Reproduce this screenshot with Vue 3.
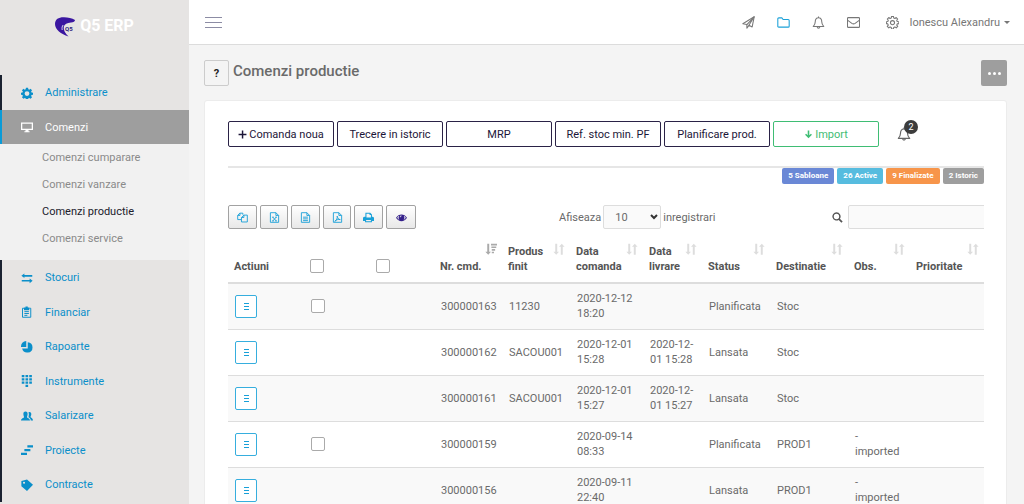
<script setup>
import { ref } from 'vue'

const menuTop = [
  { label: 'Administrare', icon: 'gear' },
  { label: 'Comenzi', icon: 'monitor', active: true },
]
const submenu = ['Comenzi cumparare', 'Comenzi vanzare', 'Comenzi productie', 'Comenzi service']
const menuBottom = [
  { label: 'Stocuri', icon: 'swap' },
  { label: 'Financiar', icon: 'clipboard' },
  { label: 'Rapoarte', icon: 'pie' },
  { label: 'Instrumente', icon: 'dialpad' },
  { label: 'Salarizare', icon: 'people' },
  { label: 'Proiecte', icon: 'steps' },
  { label: 'Contracte', icon: 'tag' },
]

// 16 x 16 drawings; "s" entries are stroked, "f" entries are filled
const icons = {
  gear: { f: ['M6.6 1h2.8l.4 2 1.2.5 1.7-1.2 2 2-1.2 1.7.5 1.2 2 .4v2.8l-2 .4-.5 1.2 1.2 1.7-2 2-1.7-1.2-1.2.5-.4 2H6.600l-.4-2-1.200-.5-1.700 1.200-2-2 1.200-1.700-.5-1.200-2-.4V7.600l2-.4.5-1.200L1.300 4.300l2-2L5 3.500 6.200 3zM8 5.500a3.200 3.200 0 1 0 0 6.400 3.200 3.200 0 0 0 0-6.400z'] },
  monitor: { f: ['M0 2h16v10h-6v1.500h1.500V15h-7v-1.500H6V12H0zM1.700 3.700v6.600h12.600V3.700z'] },
  swap: { f: ['M4.500 2v2H15v2.200H4.500V8L.5 5zM11.500 8.500v2H1v2.200h10.500V15l4-3.300z'] },
  clipboard: { s: ['M4 3H2v12h11V3h-2', 'M4.500 7.500h6M4.500 10h6M4.500 12.500h4'], f: ['M4 2h2V.5h3V2h2v3.500H4z'] },
  pie: { f: ['M7 0v8H0a7 7.500 0 0 1 7-8z', 'M9 1.500a7 7 0 1 1-7.500 8.500H9z'] },
  dialpad: { f: ['M1 0h3.500v3H1zM6 0h3.500v3H6zM11 0h3.500v3H11zM1 4.300h3.500v3H1zM6 4.300h3.500v3H6zM11 4.300h3.500v3H11zM1 8.600h3.500v3H1zM6 8.600h3.500v3H6zM11 8.600h3.500v3H11zM6 13h3.500v3H6z'] },
  people: { f: ['M6 2c2.200 0 3 1.500 2.800 3.500C8.700 7.500 8 8 8 9.500c0 1 4 1.200 4 4.500H0c0-3.300 4-3.500 4-4.500C4 8 3.300 7.500 3.200 5.500 3 3.500 3.800 2 6 2z', 'M10 3c2.500-.8 4 .5 3.700 3-.1 1.500-.9 2-.9 3.300 0 1 3.200 1.400 3.200 4.700h-3c0-2.700-1.500-3.600-3-4.500 0-1.500.5-2.500.5-4z'] },
  steps: { f: ['M8.500 1.500H16v3H8.500zM4.500 6.500h8v3h-8zM0 11.500h8v3H0z'] },
  tag: { f: ['M.5 2.500 8 .5l8 7L8 16 .5 9.500zM4 3.600a1.400 1.400 0 1 0 .1 2.800A1.400 1.400 0 0 0 4 3.600z'] },
  plane: { s: ['M1 9.500 15 1l-2.500 12.500-4-2L6 15v-4.500z', 'M6 10.500 15 1l-6.500 10.500'] },
  folder: { s: ['M1 3.500q0-1.200 1.200-1.200H6l1.500 2h6.300q1.200 0 1.200 1.200v7q0 1.200-1.200 1.200H2.200Q1 13.700 1 12.500z'] },
  bell: { s: ['M8 2.200c-3 0-4 2.300-4 5 0 3-1 4.300-2.500 5.800h13C13 11.500 12 10.200 12 7.200c0-2.700-1-5-4-5zM8 .6v1.600M6.300 13.200c.3 2.300 3.100 2.300 3.400 0'] },
  mail: { s: ['M.6 3q0-1 1-1h12.800q1 0 1 1v10q0 1-1 1H1.600q-1 0-1-1z', 'M.6 5l5.400 4q2 1.400 4 0l5.400-4'] },
  cog: { s: ['M6.800.5h2.400l.3 2 1.500.6 1.600-1.200 1.800 1.800-1.200 1.600.6 1.500 2 .3v2.300l-2 .3-.6 1.500 1.200 1.600-1.800 1.800-1.600-1.200-1.500.6-.3 2H6.800l-.3-2-1.500-.6-1.600 1.200-1.800-1.800 1.200-1.600-.6-1.500-1.700-.3V7.100l1.700-.3.6-1.500-1.200-1.600 1.800-1.800L5 3.100l1.500-.6z', 'M8 5.700a2.500 2.500 0 1 0 0 5 2.500 2.500 0 0 0 0-5z'] },
  copy: { s: ['M6 11H1V5l3-3.300h4.500V4', 'M4.300 1.700V5H1', 'M6.500 14.500V8l3.500-3.500h5v10z', 'M10 4.500V8H6.500'] },
  excel: { s: ['M2 1h8l4 4v10H2z', 'M10 1v4h4', 'm5.500 7.500 5 5.500m0-5.500-5 5.500M4.500 13H7m2 0h2.500M4.500 7.500H7m2 0h2.500'] },
  file: { s: ['M2 1h8l4 4v10H2z', 'M10 1v4h4', 'M4.500 7.500h7M4.500 10h7M4.500 12.500h7'] },
  pdf: { s: ['M2 1h8l4 4v10H2z', 'M10 1v4h4', 'M4 13.500C7 12 8 9 7.500 6c1 3.500 2 5 4.500 5-3-.8-5 .2-8 2.500z'] },
  print: { f: ['M3.500 1h7l2.500 2.500V7h.5Q16 7 16 9v4h-3v2H3v-2H0V9q0-2 2.500-2h1zM5 2.500V8h6.500V4.500h-2v-2zM4.500 11.500v2h7v-2z'] },
  eye: { f: ['M0 8.500C4 2 12 2 16 8.500 12 15 4 15 0 8.500zM1.700 8.500c1 1.500 2 2.500 3.200 3.100a5 5 0 0 1-.2-6C3.500 6.300 2.500 7.200 1.700 8.500zm12.600 0c-.8-1.300-1.800-2.200-3-2.900a5 5 0 0 1-.2 6c1.200-.6 2.200-1.600 3.200-3.100zM8 5c-1.500 0-2.500 1-2.500 2.500h1C6.500 6.500 7 6 8 6z'] },
  plus: { f: ['M6.800 1h2.600v5.600H15v2.600H9.400V15H6.800V9.200H1V6.600h5.800z'] },
  down: { f: ['M6.600 1h2.800v8.500l2.900-2.900 1.800 1.900L8 14.800 1.900 8.500l1.800-1.900 2.900 2.900z'] },
  search: { f: ['M6.500.5a6 6 0 0 1 5 9.300l4 4-1.800 1.800-4-4A6 6 0 1 1 6.500.5zm0 2.200a3.900 3.900 0 1 0 0 7.800 3.900 3.900 0 0 0 0-7.800z'] },
  sort: { f: ['M3 1h2.600v10.500H8L4.300 15.500.5 11.500H3z', 'M10.400 15.500H13V5h2.500L11.700 1 8 5h2.400z'] },
  sorted: { f: ['M3 1h2.600v10.500H8L4.300 15.500.5 11.500H3z', 'M8 1h8v2.200H8zM8.500 4.500H15v2.200H8.500zM9 8h4.500v2.200H9zM9 11.500h3v2.200H9z'] },
}

const tools = [
  { icon: 'copy', label: 'Copiaza' },
  { icon: 'excel', label: 'Excel' },
  { icon: 'file', label: 'CSV' },
  { icon: 'pdf', label: 'PDF' },
  { icon: 'print', label: 'Printeaza' },
  { icon: 'eye', label: 'Coloane' },
]
const notices = [
  { icon: 'plane', label: 'Trimite' },
  { icon: 'folder', label: 'Documente' },
  { icon: 'bell', label: 'Notificari' },
  { icon: 'mail', label: 'Mesaje' },
]
const counters = [
  { text: '5 Sabloane', tone: 'indigo' },
  { text: '26 Active', tone: 'sky' },
  { text: '9 Finalizate', tone: 'orange' },
  { text: '2 Istoric', tone: 'gray' },
]
const columns = ['Nr. cmd.', 'Produs finit', 'Data comanda', 'Data livrare', 'Status', 'Destinatie', 'Obs.', 'Prioritate']
const rows = [
  { check: true, nr: '300000163', produs: '11230', comanda: '2020-12-12 18:20', livrare: '', status: 'Planificata', dest: 'Stoc', obs: '' },
  { check: false, nr: '300000162', produs: 'SACOU001', comanda: '2020-12-01 15:28', livrare: '2020-12-01 15:28', status: 'Lansata', dest: 'Stoc', obs: '' },
  { check: false, nr: '300000161', produs: 'SACOU001', comanda: '2020-12-01 15:27', livrare: '2020-12-01 15:27', status: 'Lansata', dest: 'Stoc', obs: '' },
  { check: true, nr: '300000159', produs: '', comanda: '2020-09-14 08:33', livrare: '', status: 'Planificata', dest: 'PROD1', obs: '- imported' },
  { check: false, nr: '300000156', produs: '', comanda: '2020-09-11 22:40', livrare: '', status: 'Lansata', dest: 'PROD1', obs: '- imported' },
]
const pageSize = ref('10')
const query = ref('')
</script>

<template>
  <div class="shell">
    <svg class="sprite" aria-hidden="true">
      <symbol v-for="(icon, name) in icons" :id="'i-' + name" :key="name" viewBox="0 0 16 16">
        <path v-for="d in icon.f || []" :key="d" :d="d" fill="currentColor" fill-rule="evenodd" />
        <path v-for="d in icon.s || []" :key="d" :d="d" fill="none" stroke="currentColor" stroke-width="1.3" stroke-linejoin="round" />
      </symbol>
    </svg>

    <aside class="sidebar">
      <a class="brand" href="#">
        <svg class="logo" viewBox="0 0 20 20" aria-hidden="true">
          <path d="M0 7C0 2 4 0 9 .2c4 .1 8 .8 11 2.800 0 1.800-1.500 2.300-4 2.500C12 5.900 9.500 7 8.800 9.500 8.200 13 10 16 13.500 19.500 6 17 0 12.500 0 7z" fill="#3a16a0" />
          <path d="M7.200 13c-.4-2.200-.1-3.800 1-5" fill="none" stroke="#fff" stroke-width=".8" />
          <text x="10" y="14" font-size="6" font-weight="700" fill="#2a1a7a">Q5</text>
        </svg>
        <span>Q5 ERP</span>
      </a>
      <nav>
        <ul class="menu">
          <li v-for="m in menuTop" :key="m.label">
            <a href="#" class="item" :class="{ active: m.active }">
              <svg class="menu-icon"><use :href="'#i-' + m.icon" /></svg>{{ m.label }}
            </a>
          </li>
        </ul>
        <ul class="submenu">
          <li v-for="s in submenu" :key="s">
            <a href="#" :class="{ current: s === 'Comenzi productie' }">{{ s }}</a>
          </li>
        </ul>
        <ul class="menu">
          <li v-for="m in menuBottom" :key="m.label">
            <a href="#" class="item">
              <svg class="menu-icon"><use :href="'#i-' + m.icon" /></svg>{{ m.label }}
            </a>
          </li>
        </ul>
      </nav>
    </aside>

    <div class="main">
      <header class="topbar">
        <button class="burger" aria-label="Meniu"><i></i><i></i><i></i></button>
        <div class="top-right">
          <button v-for="n in notices" :key="n.icon" class="top-icon" :class="n.icon" :aria-label="n.label">
            <svg><use :href="'#i-' + n.icon" /></svg>
          </button>
          <button class="user">
            <svg><use href="#i-cog" /></svg>
            <span>Ionescu Alexandru</span>
            <i class="caret"></i>
          </button>
        </div>
      </header>

      <main class="page">
        <div class="title-row">
          <button class="help" aria-label="Ajutor">?</button>
          <h1>Comenzi productie</h1>
          <button class="more" aria-label="Mai multe"><i></i><i></i><i></i></button>
        </div>

        <section class="card">
          <div class="actions">
            <button class="action"><svg><use href="#i-plus" /></svg>Comanda noua</button>
            <button class="action">Trecere in istoric</button>
            <button class="action">MRP</button>
            <button class="action">Ref. stoc min. PF</button>
            <button class="action">Planificare prod.</button>
            <button class="action import"><svg><use href="#i-down" /></svg>Import</button>
            <button class="alerts" aria-label="Alerte">
              <svg><use href="#i-bell" /></svg>
              <span class="count">2</span>
            </button>
          </div>

          <div class="counters">
            <a v-for="c in counters" :key="c.text" href="#" :class="c.tone">{{ c.text }}</a>
          </div>

          <div class="table-area">
            <div class="controls">
              <div class="tools">
                <button v-for="t in tools" :key="t.icon" :class="t.icon" :aria-label="t.label">
                  <svg><use :href="'#i-' + t.icon" /></svg>
                </button>
              </div>
              <label class="length">
                Afiseaza
                <span class="select-box">
                  <select v-model="pageSize">
                    <option>10</option>
                    <option>25</option>
                    <option>50</option>
                  </select>
                  <svg viewBox="0 0 8 6"><path d="m1 1 3 3 3-3" fill="none" stroke="#333" stroke-width="2" /></svg>
                </span>
                inregistrari
              </label>
              <label class="search">
                <svg aria-label="Cauta"><use href="#i-search" /></svg>
                <input v-model="query" type="text" />
              </label>
            </div>

            <table>
              <colgroup>
                <col class="w-act" /><col class="w-c1" /><col class="w-c2" /><col class="w-nr" /><col class="w-prod" />
                <col class="w-cmd" /><col class="w-liv" /><col class="w-stat" /><col class="w-dest" /><col class="w-obs" /><col />
              </colgroup>
              <thead>
                <tr>
                  <th>Actiuni</th>
                  <th class="pick"><input type="checkbox" aria-label="Selecteaza toate" /></th>
                  <th class="pick"><input type="checkbox" aria-label="Selecteaza tot istoricul" /></th>
                  <th v-for="(c, i) in columns" :key="c" class="sortable">
                    {{ c }}
                    <svg class="sort" :class="{ on: i === 0 }"><use :href="i === 0 ? '#i-sorted' : '#i-sort'" /></svg>
                  </th>
                </tr>
              </thead>
              <tbody>
                <tr v-for="r in rows" :key="r.nr">
                  <td>
                    <button class="row-menu" :aria-label="'Actiuni ' + r.nr"><i></i><i></i><i></i></button>
                  </td>
                  <td class="pick"><input v-if="r.check" type="checkbox" :aria-label="'Selecteaza ' + r.nr" /></td>
                  <td></td>
                  <td>{{ r.nr }}</td>
                  <td>{{ r.produs }}</td>
                  <td>{{ r.comanda }}</td>
                  <td>{{ r.livrare }}</td>
                  <td>{{ r.status }}</td>
                  <td>{{ r.dest }}</td>
                  <td>{{ r.obs }}</td>
                  <td></td>
                </tr>
              </tbody>
            </table>
          </div>
        </section>
      </main>
    </div>
  </div>
</template>

<style>
body {
  margin: 0;
  background: #f4f4f4;
}
</style>

<style scoped>
* {
  box-sizing: border-box;
}
.shell {
  display: flex;
  height: 100vh;
  overflow: hidden;
  background: #f4f4f4;
  color: #6a6a6a;
  font: 11px/15px Roboto, "Liberation Sans", sans-serif;
}
.sprite {
  position: absolute;
  width: 0;
  height: 0;
}
button {
  padding: 0;
  border: 0;
  background: none;
  color: inherit;
  font: inherit;
  cursor: pointer;
}
a {
  text-decoration: none;
}
ul {
  margin: 0;
  padding: 0;
  list-style: none;
}

/* Sidebar */
.sidebar {
  flex: 0 0 189px;
  background: #e6e4e3;
}
.brand {
  display: flex;
  align-items: flex-start;
  justify-content: center;
  gap: 5px;
  height: 75px;
  padding-top: 17px;
  color: #fff;
  font-size: 16px;
  font-weight: 700;
  line-height: 18px;
}
.logo {
  width: 20px;
  height: 20px;
}
.item {
  display: flex;
  align-items: center;
  gap: 12px;
  height: 35px;
  padding-left: 19px;
  border-left: 2px solid #1a2130;
  color: #0b8fca;
}
.menu li:nth-child(even) .item {
  height: 34px;
}
.item.active {
  background: #9e9e9e;
  border-left-color: #0a9bd8;
  color: #fff;
}
.menu-icon {
  width: 12px;
  height: 12px;
}
.submenu {
  padding-bottom: 8px;
  background: #f1f1f1;
}
.submenu a {
  display: block;
  padding-left: 42px;
  color: #8a8a8a;
  line-height: 27px;
}
.submenu .current {
  color: #20202c;
}

/* Top bar */
.main {
  display: flex;
  flex: 1;
  flex-direction: column;
  min-width: 0;
}
.topbar {
  display: flex;
  flex: none;
  align-items: center;
  justify-content: space-between;
  height: 45px;
  padding: 0 14px 0 16px;
  border-bottom: 1px solid #dcdcdc;
  background: #fff;
}
.burger {
  display: grid;
  gap: 4px;
  width: 17px;
}
.burger i {
  height: 1px;
  background: #8c8ca4;
}
.top-right {
  display: flex;
  align-items: center;
  gap: 22px;
  color: #777;
}
.top-icon,
.user {
  display: flex;
  align-items: center;
}
.top-right svg {
  width: 13px;
  height: 13px;
}
.top-icon.folder {
  color: #1ba1d8;
}
.user {
  gap: 10px;
  margin-left: 4px;
}
.caret {
  margin-left: -6px;
  border: 3px solid transparent;
  border-top-color: #777;
  border-bottom: 0;
}

/* Page heading */
.page {
  padding: 15px 17px 0 15px;
}
.title-row {
  display: flex;
  align-items: flex-start;
  gap: 4px;
  height: 26px;
}
.help {
  width: 25px;
  height: 26px;
  border: 1px solid #ccc;
  border-radius: 2px;
  color: #222;
  font-weight: 700;
}
h1 {
  flex: 1;
  margin: 0;
  color: #6a6a6a;
  font-size: 15px;
  font-weight: 500;
  line-height: 22px;
}
.more {
  display: flex;
  align-items: center;
  justify-content: center;
  gap: 2px;
  width: 26px;
  height: 26px;
  border-radius: 2px;
  background: #9e9e9e;
}
.more i {
  width: 3px;
  height: 3px;
  border-radius: 50%;
  background: #fff;
}

/* Card */
.card {
  margin-top: 14px;
  padding: 20px 22px 20px 23px;
  border: 1px solid #ececec;
  border-radius: 3px;
  background: #fff;
}
.actions {
  display: flex;
  gap: 3px;
  padding-bottom: 19px;
  border-bottom: 2px solid #e6e6e6;
}
.action {
  display: flex;
  align-items: center;
  justify-content: center;
  gap: 2px;
  width: 106px;
  height: 26px;
  border: 1px solid #2a2246;
  border-radius: 2px;
  color: #1c1638;
}
.action svg {
  width: 9px;
  height: 9px;
}
.action.import {
  border-color: #3fbd74;
  color: #3fbd74;
}
.alerts {
  position: relative;
  width: 14px;
  margin-left: 15px;
  color: #666;
}
.alerts svg {
  display: block;
  width: 14px;
  height: 14px;
}
.count {
  position: absolute;
  top: -1px;
  left: 7px;
  width: 14px;
  height: 14px;
  border-radius: 50%;
  background: #3c3c3c;
  color: #fff;
  font-size: 9px;
  line-height: 14px;
}
.counters {
  display: flex;
  justify-content: flex-end;
  gap: 3px;
}
.counters a {
  padding: 0 6px;
  border-radius: 2px;
  color: #fff;
  font-size: 8px;
  font-weight: 700;
  line-height: 16px;
}
.indigo {
  background: #6a88d6;
}
.sky {
  background: #56bcdf;
}
.orange {
  background: #f7954a;
}
.gray {
  background: #9e9e9e;
}

/* Table controls */
.table-area {
  overflow: hidden;
}
.controls {
  display: flex;
  align-items: center;
  margin-top: 21px;
}
.tools {
  display: grid;
  grid-template-columns: repeat(3, 29px 28px);
  gap: 3px;
}
.tools button {
  display: flex;
  align-items: center;
  justify-content: center;
  height: 24px;
  border: 1px solid #a2a2a2;
  border-radius: 2px;
  background: linear-gradient(#fff, #e8e8e8);
  color: #18a0d8;
}
.tools svg {
  width: 11px;
  height: 11px;
}
.tools .eye {
  width: 30px;
  color: #34208a;
}
.length,
.search {
  display: flex;
  align-items: center;
}
.length {
  gap: 2px;
  margin-left: 145px;
}
.select-box {
  position: relative;
}
select {
  display: block;
  width: 58px;
  height: 24px;
  padding: 0 11px;
  border: 1px solid #ddd;
  border-radius: 2px;
  appearance: none;
  background: #fafafa;
  color: #6a6a6a;
  font: inherit;
}
.select-box svg {
  position: absolute;
  top: 9px;
  right: 3px;
  width: 8px;
  height: 6px;
  pointer-events: none;
}
.search {
  flex: 1;
  gap: 5px;
  justify-content: flex-end;
  margin-right: -4px;
  color: #555;
}
.search svg {
  width: 11px;
  height: 11px;
}
.search input {
  width: 140px;
  height: 24px;
  border: 1px solid #ddd;
  border-radius: 2px;
  background: #fafafa;
  font: inherit;
}

/* Orders table */
table {
  width: 100%;
  margin-top: 7px;
  border-collapse: collapse;
  table-layout: fixed;
}
.w-act { width: 72px; }
.w-c1 { width: 66px; }
.w-c2 { width: 68px; }
.w-nr { width: 68px; }
.w-prod { width: 68px; }
.w-cmd { width: 73px; }
.w-liv { width: 59px; }
.w-stat { width: 68px; }
.w-dest { width: 78px; }
.w-obs { width: 62px; }
th {
  position: relative;
  height: 47px;
  padding: 7px 6px 8px;
  border-bottom: 2px solid #ddd;
  color: #555;
  font-weight: 700;
  text-align: left;
  vertical-align: bottom;
}
th.sortable {
  padding-right: 20px;
}
.sort {
  position: absolute;
  top: 7px;
  right: 5px;
  width: 12px;
  height: 12px;
  color: #ddd;
}
.sort.on {
  color: #aaa;
}
td {
  height: 46px;
  padding: 0 6px 0 7px;
  border-top: 1px solid #ddd;
}
tbody tr:nth-child(odd) {
  background: #f9f9f9;
}
.pick input {
  display: block;
  width: 14px;
  height: 14px;
  margin: 0 0 0 4px;
  border: 1px solid #aaa;
  border-radius: 2px;
  appearance: none;
  background: #fff;
}
th.pick {
  padding-bottom: 9px;
}
.row-menu {
  display: grid;
  gap: 2px;
  align-content: center;
  justify-content: center;
  width: 22px;
  height: 23px;
  border: 1px solid #36aede;
  border-radius: 2px;
  background: #fff;
}
.row-menu i {
  width: 5px;
  height: 1px;
  background: #18a0d8;
}
</style>
